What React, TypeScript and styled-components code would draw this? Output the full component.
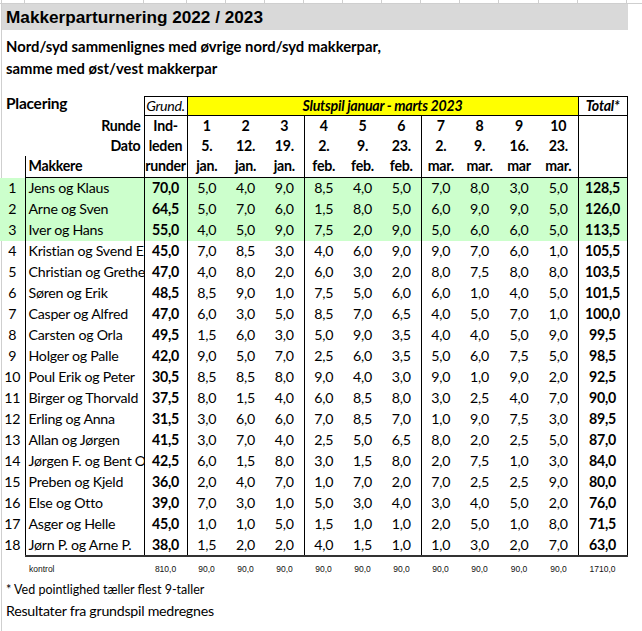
import React from "react";
import styled, { createGlobalStyle, css } from "styled-components";

const Global = createGlobalStyle`
  html, body { margin: 0; padding: 0; background: #fff; }
  body { font-family: Lato, "Noto Sans", sans-serif; color: #000; }
`;

const COLS = [25, 119, 43, 39, 39, 39, 39, 39, 39, 39, 39, 40, 39, 49];

const Sheet = styled.div`
  width: 642px;
  height: 631px;
  overflow: hidden;
  background: linear-gradient(to right, transparent 1px, #cfcfcf 1px, #cfcfcf 2px, transparent 2px);
`;

const TopGrid = styled.div`
  display: grid;
  grid-template-columns: ${COLS.map((c) => c + "px").join(" ")} 1fr;
  height: 3px;
  border-bottom: 1px solid #cfcfcf;
`;

const GridTick = styled.div`
  border-right: 1px solid #cfcfcf;
`;

const TitleBar = styled.div`
  margin-left: 2px;
  width: 626px;
  height: 26px;
  background: #d9d9d9;
  font-family: "Liberation Sans", Arial, sans-serif;
  font-weight: bold;
  font-size: 17.2px;
  line-height: 27px;
  padding-left: 4px;
  box-sizing: border-box;
  white-space: nowrap;
`;

const Subtitle = styled.div`
  margin-top: 5px;
  padding-left: 6px;
  font-weight: bold;
  font-size: 14.8px;
  line-height: 22px;
`;

const Table = styled.table`
  margin-top: 17px;
  border-collapse: collapse;
  table-layout: fixed;
  width: 627px;
  font-size: 14.2px;
  letter-spacing: -0.25px;
`;

type CellProps = {
  $l?: boolean;
  $r?: boolean;
  $t?: boolean;
  $b?: boolean;
  $thick?: boolean;
  $bold?: boolean;
  $italic?: boolean;
  $align?: "left" | "center" | "right";
  $fill?: string;
};

const Cell = styled.td<CellProps>`
  padding: 0;
  white-space: nowrap;
  overflow: hidden;
  text-align: ${(p) => p.$align ?? "center"};
  font-weight: ${(p) => (p.$bold ? "bold" : "normal")};
  font-style: ${(p) => (p.$italic ? "italic" : "normal")};
  background: ${(p) => p.$fill ?? "transparent"};
  border-left: ${(p) => (p.$l ? "1px solid #000" : "none")};
  border-right: ${(p) => (p.$r ? "1px solid #000" : "none")};
  border-top: ${(p) => (p.$t ? "1px solid #000" : "none")};
  ${(p) =>
    p.$b
      ? css`
          border-bottom: ${p.$thick ? "2px solid #333" : "1px solid #000"};
        `
      : css`
          border-bottom: none;
        `}
  line-height: 18px;
`;

const HeadRow = styled.tr<{ $h: number }>`
  height: ${(p) => p.$h}px;
`;

const DataRow = styled.tr`
  height: 21px;
`;

const Placering = styled(Cell)`
  font-size: 15.5px;
  padding-left: 6px;
  overflow: visible;
  vertical-align: top;
  line-height: 12px;
`;

const RightLabel = styled(Cell)`
  padding-right: 3px;
`;

const NameCell = styled(Cell)`
  padding-left: 3px;
  text-overflow: clip;
`;

const KontrolRow = styled.tr`
  height: 25px;
`;

const KontrolCell = styled.td<{ $align?: "left" | "center" }>`
  padding: 0;
  font-family: "Liberation Sans", Arial, sans-serif;
  font-size: 8.5px;
  letter-spacing: 0;
  text-align: ${(p) => p.$align ?? "center"};
  white-space: nowrap;
  color: #111;
`;

const KontrolLabel = styled(KontrolCell)`
  padding-left: 4px;
`;

const Footnote = styled.div<{ $size: number; $h: number; $ls: number }>`
  padding-left: 6px;
  font-size: ${(p) => p.$size}px;
  line-height: ${(p) => p.$h}px;
  letter-spacing: ${(p) => p.$ls}px;
  white-space: nowrap;
`;

const GREEN = "#ccffcc";
const YELLOW = "#ffff00";

type Row = [number, string, string, string[], string];

const rows: Row[] = [
  [1, "Jens og Klaus", "70,0", ["5,0", "4,0", "9,0", "8,5", "4,0", "5,0", "7,0", "8,0", "3,0", "5,0"], "128,5"],
  [2, "Arne og Sven", "64,5", ["5,0", "7,0", "6,0", "1,5", "8,0", "5,0", "6,0", "9,0", "9,0", "5,0"], "126,0"],
  [3, "Iver og Hans", "55,0", ["4,0", "5,0", "9,0", "7,5", "2,0", "9,0", "5,0", "6,0", "6,0", "5,0"], "113,5"],
  [4, "Kristian og Svend Erik", "45,0", ["7,0", "8,5", "3,0", "4,0", "6,0", "9,0", "9,0", "7,0", "6,0", "1,0"], "105,5"],
  [5, "Christian og Grethe", "47,0", ["4,0", "8,0", "2,0", "6,0", "3,0", "2,0", "8,0", "7,5", "8,0", "8,0"], "103,5"],
  [6, "Søren og Erik", "48,5", ["8,5", "9,0", "1,0", "7,5", "5,0", "6,0", "6,0", "1,0", "4,0", "5,0"], "101,5"],
  [7, "Casper og Alfred", "47,0", ["6,0", "3,0", "5,0", "8,5", "7,0", "6,5", "4,0", "5,0", "7,0", "1,0"], "100,0"],
  [8, "Carsten og Orla", "49,5", ["1,5", "6,0", "3,0", "5,0", "9,0", "3,5", "4,0", "4,0", "5,0", "9,0"], "99,5"],
  [9, "Holger og Palle", "42,0", ["9,0", "5,0", "7,0", "2,5", "6,0", "3,5", "5,0", "6,0", "7,5", "5,0"], "98,5"],
  [10, "Poul Erik og Peter", "30,5", ["8,5", "8,5", "8,0", "9,0", "4,0", "3,0", "9,0", "1,0", "9,0", "2,0"], "92,5"],
  [11, "Birger og Thorvald", "37,5", ["8,0", "1,5", "4,0", "6,0", "8,5", "8,0", "3,0", "2,5", "4,0", "7,0"], "90,0"],
  [12, "Erling og Anna", "31,5", ["3,0", "6,0", "6,0", "7,0", "8,5", "7,0", "1,0", "9,0", "7,5", "3,0"], "89,5"],
  [13, "Allan og Jørgen", "41,5", ["3,0", "7,0", "4,0", "2,5", "5,0", "6,5", "8,0", "2,0", "2,5", "5,0"], "87,0"],
  [14, "Jørgen F. og Bent Ove", "42,5", ["6,0", "1,5", "8,0", "3,0", "1,5", "8,0", "2,0", "7,5", "1,0", "3,0"], "84,0"],
  [15, "Preben og Kjeld", "36,0", ["2,0", "4,0", "7,0", "1,0", "7,0", "2,0", "7,0", "2,5", "2,5", "9,0"], "80,0"],
  [16, "Else og Otto", "39,0", ["7,0", "3,0", "1,0", "5,0", "3,0", "4,0", "3,0", "4,0", "5,0", "2,0"], "76,0"],
  [17, "Asger og Helle", "45,0", ["1,0", "1,0", "5,0", "1,5", "1,0", "1,0", "2,0", "5,0", "1,0", "8,0"], "71,5"],
  [18, "Jørn P. og Arne P.", "38,0", ["1,5", "2,0", "2,0", "4,0", "1,5", "1,0", "1,0", "3,0", "2,0", "7,0"], "63,0"],
];

const rounds = ["1", "2", "3", "4", "5", "6", "7", "8", "9", "10"];
const dates = ["5.", "12.", "19.", "2.", "9.", "23.", "2.", "9.", "16.", "23."];
const months = ["jan.", "jan.", "jan.", "feb.", "feb.", "feb.", "mar.", "mar.", "mar", "mar."];
const groupStart = (i: number) => i === 0 || i === 3 || i === 6;

export default function App() {
  return (
    <Sheet>
      <Global />
      <TopGrid>
        {COLS.map((_, i) => (
          <GridTick key={i} />
        ))}
        <div />
      </TopGrid>
      <TitleBar>Makkerparturnering 2022 / 2023</TitleBar>
      <Subtitle>
        Nord/syd sammenlignes med øvrige nord/syd makkerpar,
        <br />
        samme med øst/vest makkerpar
      </Subtitle>
      <Table>
        <colgroup>
          {COLS.map((w, i) => (
            <col key={i} style={{ width: w }} />
          ))}
        </colgroup>
        <thead>
          <HeadRow $h={17}>
            <Placering colSpan={2} $bold $align="left">
              Placering
            </Placering>
            <Cell $l $t $b $italic>
              Grund.
            </Cell>
            <Cell colSpan={10} $l $t $b $bold $italic $fill={YELLOW}>
              Slutspil januar - marts 2023
            </Cell>
            <Cell $l $r $t $b $bold $italic>
              Total*
            </Cell>
          </HeadRow>
          <HeadRow $h={21}>
            <RightLabel colSpan={2} $bold $align="right">
              Runde
            </RightLabel>
            <Cell $l $bold>
              Ind-
            </Cell>
            {rounds.map((r, i) => (
              <Cell key={i} $l={groupStart(i)} $bold>
                {r}
              </Cell>
            ))}
            <Cell $l $r />
          </HeadRow>
          <HeadRow $h={19}>
            <RightLabel colSpan={2} $bold $align="right">
              Dato
            </RightLabel>
            <Cell $l $bold>
              leden
            </Cell>
            {dates.map((d, i) => (
              <Cell key={i} $l={groupStart(i)} $bold>
                {d}
              </Cell>
            ))}
            <Cell $l $r />
          </HeadRow>
          <HeadRow $h={22}>
            <Cell />
            <NameCell $l $b $bold $align="left">
              Makkere
            </NameCell>
            <Cell $l $b $bold>
              runder
            </Cell>
            {months.map((m, i) => (
              <Cell key={i} $l={groupStart(i)} $b $bold>
                {m}
              </Cell>
            ))}
            <Cell $l $r $b />
          </HeadRow>
        </thead>
        <tbody>
          {rows.map(([rank, name, grund, scores, total]) => {
            const fill = rank <= 3 ? GREEN : undefined;
            const last = rank === 18;
            return (
              <DataRow key={rank}>
                <Cell $fill={fill}>{rank}</Cell>
                <NameCell $l $b={last} $thick $align="left" $fill={fill}>
                  {name}
                </NameCell>
                <Cell $l $b={last} $thick $bold $fill={fill}>
                  {grund}
                </Cell>
                {scores.map((s, i) => (
                  <Cell key={i} $l={groupStart(i)} $b={last} $thick $fill={fill}>
                    {s}
                  </Cell>
                ))}
                <Cell $l $r $b={last} $thick $bold $fill={fill}>
                  {total}
                </Cell>
              </DataRow>
            );
          })}
          <KontrolRow>
            <KontrolCell />
            <KontrolLabel $align="left">kontrol</KontrolLabel>
            <KontrolCell>810,0</KontrolCell>
            {rounds.map((_, i) => (
              <KontrolCell key={i}>90,0</KontrolCell>
            ))}
            <KontrolCell>1710,0</KontrolCell>
          </KontrolRow>
        </tbody>
      </Table>
      <Footnote $size={12.5} $h={18} $ls={0}>
        * Ved pointlighed tæller flest 9-taller
      </Footnote>
      <Footnote $size={14.2} $h={24} $ls={-0.25}>
        Resultater fra grundspil medregnes
      </Footnote>
    </Sheet>
  );
}
